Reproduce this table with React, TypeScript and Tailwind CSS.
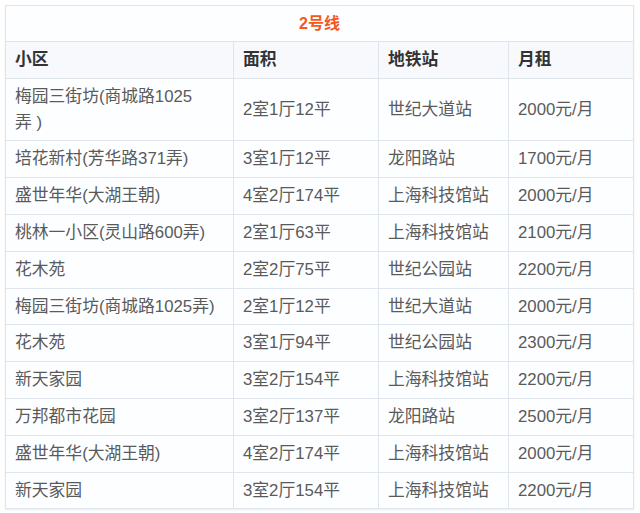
const rows: [string, string, string, string][] = [
  ["培花新村(芳华路371弄)", "3室1厅12平", "龙阳路站", "1700元/月"],
  ["盛世年华(大湖王朝)", "4室2厅174平", "上海科技馆站", "2000元/月"],
  ["桃林一小区(灵山路600弄)", "2室1厅63平", "上海科技馆站", "2100元/月"],
  ["花木苑", "2室2厅75平", "世纪公园站", "2200元/月"],
  ["梅园三街坊(商城路1025弄)", "2室1厅12平", "世纪大道站", "2000元/月"],
  ["花木苑", "3室1厅94平", "世纪公园站", "2300元/月"],
  ["新天家园", "3室2厅154平", "上海科技馆站", "2200元/月"],
  ["万邦都市花园", "3室2厅137平", "龙阳路站", "2500元/月"],
  ["盛世年华(大湖王朝)", "4室2厅174平", "上海科技馆站", "2000元/月"],
  ["新天家园", "3室2厅154平", "上海科技馆站", "2200元/月"],
];

const cell = "border border-[#dfe5ec] pl-[9px] pr-[8px] py-[5px] leading-[25.8px] align-middle";

export default function App() {
  return (
    <div className="w-[640px] h-[513px] bg-white pt-[5px] pl-[5px] font-['Liberation_Sans','Noto_Sans_CJK_SC',sans-serif] text-[16.8px] text-[#5a5a5a]">
      <table className="w-[628px] table-fixed border-collapse bg-[#fdfeff] shadow-[0_1px_2px_rgba(0,0,0,0.08)]">
        <colgroup>
          <col className="w-[228px]" />
          <col className="w-[145px]" />
          <col className="w-[130px]" />
          <col className="w-[125px]" />
        </colgroup>
        <tbody>
          {/* Title */}
          <tr>
            <td colSpan={4} className="border border-[#dfe5ec] h-[36px] text-center font-bold text-[16px] text-[#f4581f] leading-[26px]">
              2号线
            </td>
          </tr>
          {/* Header */}
          <tr className="bg-[#f7f9fc]">
            <td className={`${cell} font-bold text-[#333]`}>小区</td>
            <td className={`${cell} font-bold text-[#333]`}>面积</td>
            <td className={`${cell} font-bold text-[#333]`}>地铁站</td>
            <td className={`${cell} font-bold text-[#333]`}>月租</td>
          </tr>
          <tr>
            <td className={cell}>
              梅园三街坊(商城路1025
              <br />弄 )
            </td>
            <td className={cell}>2室1厅12平</td>
            <td className={cell}>世纪大道站</td>
            <td className={cell}>2000元/月</td>
          </tr>
          {rows.map((r, i) => (
            <tr key={i}>
              {r.map((c, j) => (
                <td key={j} className={cell}>
                  {c}
                </td>
              ))}
            </tr>
          ))}
        </tbody>
      </table>
    </div>
  );
}
